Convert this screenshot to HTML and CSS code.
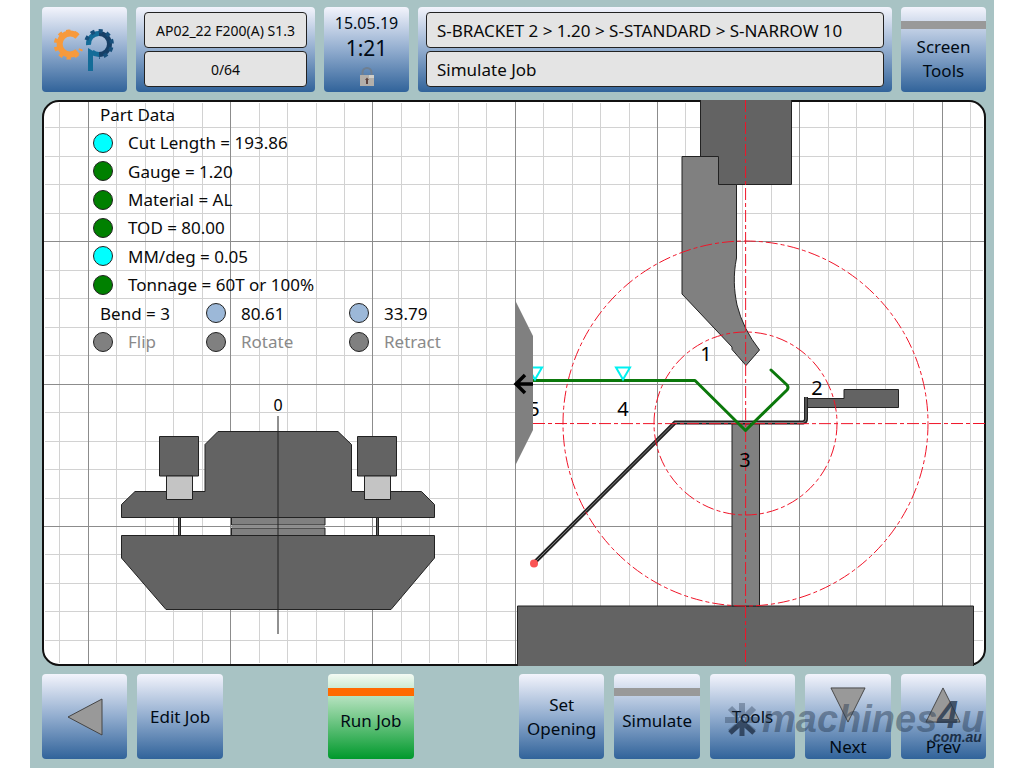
FILE: index.html
```html
<!DOCTYPE html>
<html lang="en">
<head>
<meta charset="utf-8">
<title>Simulate Job</title>
<link rel="stylesheet" href="styles.css">
</head>
<body>
<div class="app">
  <header class="topbar">
    <button class="key" aria-label="Home">
      <svg class="logo" viewBox="0 0 64 44" fill="none">
        <path d="M24.500 8.500A10.500 10.500 0 1 0 24.500 23.500" stroke="#f79a3c" stroke-width="6"/>
        <path d="M24.500 7A13 13 0 1 0 28 21" stroke="#f79a3c" stroke-width="4" stroke-dasharray="4 4"/>
        <path d="M46 5.500A10.500 10.500 0 0 1 46 26.500" stroke="#173f66" stroke-width="5"/>
        <path d="M46 26.500Q42 26.500 39 24M35.500 17A10.500 10.500 0 0 1 46 5.500" stroke="#146c98" stroke-width="5"/>
        <path d="M33.500 12A13 13 0 1 1 46 29" stroke="#174f7b" stroke-width="4" stroke-dasharray="4 4"/>
        <path d="M35 20L40 23V43H35Z" fill="#146c98"/>
      </svg>
    </button>
    <div class="panel panel-status">
      <input class="field field-small" value="AP02_22 F200(A) S1.3" aria-label="Machine" readonly>
      <input class="field field-small" value="0/64" aria-label="Parts count" readonly>
    </div>
    <button class="key key-clock">
      <span class="date">15.05.19</span>
      <span class="time">1:21</span>
      <svg class="lock" viewBox="0 0 14 20">
        <path d="M2.500 10V5.500A4.500 4.500 0 0 1 11.500 5.500V10" fill="none" stroke="#6f7f91" stroke-width="2"/>
        <rect y="8" width="14" height="11" fill="#b3afaa"/>
        <path d="M9 8H14V11H9Z" fill="#d2d0ca"/>
        <path d="M7 10.500L9 13H8V17H6V13H5Z" fill="#5d4440"/>
      </svg>
    </button>
    <div class="panel panel-job">
      <input class="field" value="S-BRACKET 2 &gt; 1.20 &gt; S-STANDARD &gt; S-NARROW 10" aria-label="Job" readonly>
      <input class="field" value="Simulate Job" aria-label="Mode" readonly>
    </div>
    <button class="key key-strip key-screen">Screen<br>Tools</button>
  </header>

  <main class="stage">
    <svg class="drawing" viewBox="42 100 944 566">
      <rect class="frame" x="43" y="101" width="942" height="564" rx="16"/>
      <path class="minor" d="M59.500 103V663M116.500 103V663M145.500 103V663M173.500 103V663M202.500 103V663M259.500 103V663M287.500 103V663M316.500 103V663M344.500 103V663M401.500 103V663M429.500 103V663M458.500 103V663M486.500 103V663M543.500 103V663M572.500 103V663M600.500 103V663M629.500 103V663M685.500 103V663M714.500 103V663M742.500 103V663M771.500 103V663M828.500 103V663M856.500 103V663M885.500 103V663M913.500 103V663M970.500 103V663
        M45 127.500H983M45 156.500H983M45 184.500H983M45 213.500H983M45 270.500H983M45 298.500H983M45 327.500H983M45 355.500H983M45 412.500H983M45 441.500H983M45 469.500H983M45 498.500H983M45 554.500H983M45 583.500H983M45 611.500H983M45 640.500H983"/>
      <path class="major" d="M88.500 102V664M230.500 102V664M372.500 102V664M515.500 102V664M657.500 102V664M799.500 102V664M942.500 102V664M44 241.500H984M44 384.500H984M44 526.500H984"/>

      <g class="steel">
        <path d="M159.500 436.500H198.500V476H159.500ZM357.500 436.500H396.500V476H357.500Z"/>
        <path d="M121.500 504.500L135 491.500H205V444.500L218 431.500H338L351.500 444.500V491.500H421.500L434.500 504.500V517.500H121.500Z"/>
        <path d="M178.500 517.500H180.500V535.500H178.500ZM376.500 517.500H378.500V535.500H376.500Z"/>
        <path d="M121.500 535.500H434.500V558L391 609.500H166L121.500 558Z"/>
        <path d="M517.500 606H973.500V670H517.500Z"/>
        <path d="M700.500 96H791.500V184.500H700.500Z"/>
        <path d="M807 398.500H844V389.500H898.500V407.500H807Z"/>
      </g>
      <path class="gap" d="M231 524H325V529H231Z"/>
      <path class="major" d="M231 526.500H325"/>
      <path class="light" d="M166.500 476H192.500V499.500H166.500ZM364.500 476H390.500V499.500H364.500Z"/>
      <g class="tool">
        <path d="M231.500 517.500H325V525H231.500ZM231.500 528H325V535.500H231.500Z"/>
        <path d="M682 156.500H718.500V184.500H736.500V258C733 276 734 290 737 305Q743 329 759.500 350L746 365.500L732 349.500V347L682 294Z"/>
        <path d="M732 423H759.500V606H732Z"/>
      </g>
      <path class="axis" d="M278 416V634"/>

      <path class="sheet-edge" d="M534 563L675 422.500H803Q806 422 806 419V397"/>
      <path class="sheet-core" d="M534 563L675 422.500H803Q806 422 806 419V397"/>
      <g class="center">
        <path d="M745.500 100Q745.800 383 745.500 666"/>
        <path d="M533 423.500Q760 423.800 987 423.500"/>
        <circle cx="745.500" cy="423.500" r="91.500"/>
        <circle cx="745.500" cy="423.500" r="182.500"/>
      </g>
      <circle cx="534" cy="563.500" r="4" fill="#fa5454"/>
      <path class="part" d="M533 380.500H695L745.500 430.500L787 390Q789 387.500 787 385L771 370"/>
      <path class="marker" d="M616 367.500H630L623 379.500ZM528 367.500H542L535 379.500Z"/>
      <g class="mark">
        <text x="706" y="361">1</text>
        <text x="817" y="395">2</text>
        <text x="745" y="467">3</text>
        <text x="623" y="416">4</text>
        <text x="534" y="416">5</text>
        <text class="zero" x="278" y="411">0</text>
      </g>
      <path d="M515 300L533 336V430L515 466Z" fill="#808080"/>
      <path d="M533 384H516M525 375L516 384L525 393" fill="none" stroke="#000" stroke-width="3.500"/>
    </svg>

    <section class="data">
      <h1 class="row heading">Part Data</h1>
      <p class="row"><span class="item"><i class="dot cyan"></i>Cut Length = 193.86</span></p>
      <p class="row"><span class="item"><i class="dot green"></i>Gauge = 1.20</span></p>
      <p class="row"><span class="item"><i class="dot green"></i>Material = AL</span></p>
      <p class="row"><span class="item"><i class="dot green"></i>TOD = 80.00</span></p>
      <p class="row"><span class="item"><i class="dot cyan"></i>MM/deg = 0.05</span></p>
      <p class="row"><span class="item"><i class="dot green"></i>Tonnage = 60T or 100%</span></p>
      <p class="row cells"><span class="heading">Bend = 3</span><span class="item"><i class="dot blue"></i>80.61</span><span class="item"><i class="dot blue"></i>33.79</span></p>
      <div class="row cells">
        <button class="item option"><i class="dot gray"></i>Flip</button>
        <button class="item option"><i class="dot gray"></i>Rotate</button>
        <button class="item option"><i class="dot gray"></i>Retract</button>
      </div>
    </section>
  </main>

  <footer class="bottombar">
    <button class="key" aria-label="Back"><svg class="arrow" viewBox="0 0 36 38"><path d="M1 19L35 1V37Z"/></svg></button>
    <button class="key">Edit Job</button>
    <button class="key key-strip key-run">Run Job</button>
    <button class="key key-opening">Set<br>Opening</button>
    <button class="key key-strip">Simulate</button>
    <button class="key">Tools</button>
    <button class="key key-page"><svg class="arrow" viewBox="0 0 38 38"><path d="M1 1H37L19 37Z"/></svg>Next</button>
    <button class="key key-page"><svg class="arrow" viewBox="0 0 38 38"><path d="M1 37L19 1L37 37Z"/></svg>Prev</button>
    <svg class="watermark" viewBox="0 0 264 48">
      <g fill="none" stroke="#24364d">
        <path d="M20 3V18M3 20H17M37 20H23M8 8L16 16M32 8L24 16M8 32L15 26M32 32L25 26" stroke-width="6" opacity=".35"/>
        <path d="M20 36V24M8 33L20 22L32 33" stroke-width="5" opacity=".8"/>
      </g>
      <text class="brand" x="40" y="32">machines</text>
      <text class="brand four" x="215" y="28">4</text>
      <text class="brand" x="239" y="32">u</text>
      <text class="domain" x="207" y="42">.com.au</text>
    </svg>
  </footer>
</div>
</body>
</html>
```
FILE: styles.css
```css
* { box-sizing: border-box; }
body {
  margin: 0;
  background: #fff;
  color: #0a0a0a;
  font-family: "Noto Sans", "Open Sans", sans-serif;
  font-size: 17px;
}
.app {
  min-height: 100vh;
  margin: 0 30px;
  padding: 7px 8px 8px 12px;
  background: #a8c3c4;
  display: flex;
  flex-direction: column;
  gap: 8px;
}
.topbar { display: flex; gap: 9px; }
.key {
  width: 85px;
  height: 85px;
  padding: 0;
  border: 0;
  border-radius: 4px;
  background: linear-gradient(#f3f4fc, #92adcf 50%, #31639a);
  color: #000a14;
  font: inherit;
  line-height: 24px;
  display: flex;
  flex-direction: column;
  align-items: center;
  justify-content: center;
}
.key-strip {
  position: relative;
  padding-top: 8px;
}
.key-screen { padding-top: 18px; }
.key-strip::before {
  content: "";
  position: absolute;
  top: 14px;
  left: 0;
  right: 0;
  height: 8px;
  background: #999;
}
.logo { width: 64px; height: 44px; }
.panel {
  height: 85px;
  padding: 5px 8px;
  border-radius: 4px;
  background: linear-gradient(#f3f4fc, #92adcf 50%, #31639a);
  display: flex;
  flex-direction: column;
  gap: 3px;
}
.panel-status { width: 179px; }
.panel-job { flex: 1; }
.field {
  flex: 1;
  width: 100%;
  min-height: 0;
  padding: 0 10px;
  border: 1px solid #222;
  border-radius: 4px;
  background: #e4e4e4;
  color: #0a0a0a;
  font: inherit;
}
.field-small { padding: 0; text-align: center; font-size: 14px; }
.key-clock { line-height: 20px; }
.date { font-size: 16px; line-height: 20px; }
.time { font-size: 21px; line-height: 30px; }
.lock { width: 14px; height: 20px; margin-top: 4px; }

.stage { display: grid; }
.drawing { grid-area: 1 / 1; width: 100%; display: block; }
.frame { fill: #fff; stroke: #111; stroke-width: 2; }
.minor { stroke: #d2d2d2; }
.major { stroke: #8c8c8c; }
.steel { fill: #636363; stroke: #222; }
.light { fill: #c4c4c4; stroke: #222; }
.tool { fill: #808080; stroke: #222; }
.gap { fill: #fff; }
.axis { stroke: #222; }
.sheet-edge { fill: none; stroke: #222; stroke-width: 4; }
.sheet-core { fill: none; stroke: #808080; stroke-width: 1; }
.center { fill: none; stroke: #f01428; stroke-dasharray: 12 3 4 3; }
.part { fill: none; stroke: #0b780b; stroke-width: 3; stroke-linejoin: round; stroke-linecap: round; }
.marker { fill: #fff; stroke: #00f0f0; stroke-width: 2; }
.mark { font-size: 20px; text-anchor: middle; }
.zero { font-size: 16px; }

.data {
  grid-area: 1 / 1;
  justify-self: start;
  align-self: start;
  z-index: 1;
  height: 256px;
  margin-left: 51px;
  display: grid;
  grid-template-rows: repeat(9, 1fr);
}
.row { margin: 0; font-size: 17px; font-weight: 400; display: flex; align-items: center; }
.heading { padding-left: 7px; }
.cells { display: grid; grid-template-columns: 113px 143px auto; }
.item { display: flex; align-items: center; gap: 15px; }
.option { padding: 0; border: 0; background: none; font: inherit; color: #8a8a8a; }
.dot { width: 20px; height: 20px; border: 1px solid #222; border-radius: 50%; }
.cyan { background: #0ff; }
.green { background: #008000; }
.blue { background: #9cb8d8; }
.gray { background: #808080; }

.bottombar {
  position: relative;
  display: grid;
  grid-template-columns: repeat(10, 1fr);
  gap: 10px;
}
.bottombar .key { width: 100%; }
.bottombar .key-run {
  grid-column: 4;
  background: linear-gradient(#f4fbf4, #7ccb8f 50%, #00992c);
}
.bottombar .key-run::before { background: #ff6a00; }
.key-opening { grid-column: 6; }
.arrow { width: 36px; height: 38px; fill: #999; stroke: #444; }
.key-page { justify-content: space-between; padding: 12px 0 0; }
.watermark {
  position: absolute;
  right: 0;
  bottom: 11px;
  width: 264px;
  height: 48px;
  overflow: visible;
  pointer-events: none;
}
.brand {
  fill: #24364d;
  fill-opacity: .45;
  font: italic bold 38px "Liberation Sans", sans-serif;
}
.four { fill-opacity: .8; }
.domain { fill: #1c3048; font: italic bold 14px "Liberation Sans", sans-serif; }
```
